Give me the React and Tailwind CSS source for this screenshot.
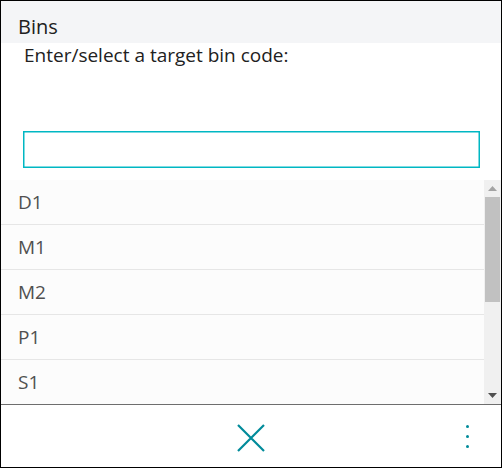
const BINS = ["D1", "M1", "M2", "P1", "S1", "S2", "W1", "W2", "W3"];

export default function App() {
  return (
    <div
      className="w-[502px] h-[468px] border border-black bg-white flex flex-col overflow-hidden"
      style={{ fontFamily: '"Open Sans", "Noto Sans", sans-serif' }}
    >
      {/* Header */}
      <div className="h-[42px] shrink-0 bg-[#f4f5f7] flex items-end pl-[17px] pb-[3px]">
        <span className="text-[20px] leading-[26px] text-[#212121]">Bins</span>
      </div>

      {/* Prompt + input */}
      <div className="h-[137px] shrink-0 bg-white px-[22px]">
        <p className="pl-px text-[19px] leading-[24px] text-[#212121]">Enter/select a target bin code:</p>
        <div className="mt-[64px] w-[457px] h-[37px] bg-white ring-[1.5px] ring-inset ring-[#00b7c3]">
          <input className="w-full h-full px-2 outline-none bg-transparent" />
        </div>
      </div>

      {/* List */}
      <div className="h-[225px] shrink-0 flex border-b border-[#6e6e6e] bg-[#fcfcfc]">
        <div className="flex-1 overflow-hidden">
          {BINS.map((b) => (
            <div
              key={b}
              className="h-[45px] border-b border-[#e6e6e6] flex items-center pl-[17px] pt-[1px] text-[19px] text-[#505050]"
            >
              {b}
            </div>
          ))}
        </div>
        {/* Scrollbar */}
        <div className="w-[17px] bg-[#f0f0f0] flex flex-col">
          <div className="h-[17px] flex items-center justify-center">
            <svg width="9" height="5" viewBox="0 0 9 5">
              <path d="M0 5 L4.5 0 L9 5 Z" fill="#a3a3a3" />
            </svg>
          </div>
          <div className="mx-[1px] h-[105px] bg-[#c1c1c1]" />
          <div className="flex-1" />
          <div className="h-[17px] flex items-center justify-center">
            <svg width="9" height="5" viewBox="0 0 9 5">
              <path d="M0 0 L4.5 5 L9 0 Z" fill="#505050" />
            </svg>
          </div>
        </div>
      </div>

      {/* Footer */}
      <div className="flex-1 relative flex items-center justify-center bg-white">
        <svg width="28" height="28" viewBox="0 0 28 28" className="mt-[3px]">
          <path d="M1 1 L27 27 M27 1 L1 27" stroke="#008b9a" strokeWidth="2.2" fill="none" />
        </svg>
        <div className="absolute right-[32px] top-[20px] flex flex-col gap-[7px]">
          <span className="block w-[3px] h-[3px] rounded-full bg-[#008b9a]" />
          <span className="block w-[3px] h-[3px] rounded-full bg-[#008b9a]" />
          <span className="block w-[3px] h-[3px] rounded-full bg-[#008b9a]" />
        </div>
      </div>
    </div>
  );
}
